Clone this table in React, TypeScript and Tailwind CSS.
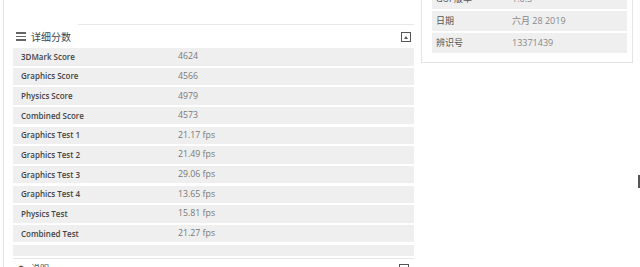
import React from "react";

const scores = [
  { label: "3DMark Score", value: "4624" },
  { label: "Graphics Score", value: "4566" },
  { label: "Physics Score", value: "4979" },
  { label: "Combined Score", value: "4573" },
  { label: "Graphics Test 1", value: "21.17 fps" },
  { label: "Graphics Test 2", value: "21.49 fps" },
  { label: "Graphics Test 3", value: "29.06 fps" },
  { label: "Graphics Test 4", value: "13.65 fps" },
  { label: "Physics Test", value: "15.81 fps" },
  { label: "Combined Test", value: "21.27 fps" },
];

const info = [
  { label: "GUI 版本", value: "1.0.5" },
  { label: "日期", value: "六月 28 2019" },
  { label: "辨识号", value: "13371439" },
];

function ListIcon() {
  return (
    <div className="flex flex-col gap-[2px] w-[10px]">
      <div className="h-[1.5px] bg-[#666]" />
      <div className="h-[1.5px] bg-[#666]" />
      <div className="h-[1.5px] bg-[#666]" />
    </div>
  );
}

function CollapseIcon() {
  return (
    <div className="w-[10px] h-[10px] border-[1.5px] border-[#555] flex items-center justify-center">
      <div className="w-0 h-0 border-l-[2.5px] border-r-[2.5px] border-b-[3px] border-l-transparent border-r-transparent border-b-[#555]" />
    </div>
  );
}

export default function App() {
  return (
    <div
      className="w-[640px] h-[267px] overflow-hidden bg-white flex relative"
      style={{ fontFamily: '"Open Sans", "Noto Sans CJK SC", sans-serif' }}
    >
      {/* page edge */}
      <div className="w-[3px] shrink-0" />
      <div className="w-px shrink-0 bg-[#e2e2e2]" />

      {/* left card */}
      <div className="ml-[9px] w-[401px] shrink-0 self-start flex flex-col">
        <div className="h-[25px] shrink-0 flex items-end">
          <div className="ml-[65px] flex-1 h-px bg-[#e8e8e8]" />
        </div>
        <div className="h-[23px] shrink-0 flex items-center pl-[3px] pr-[3px]">
          <ListIcon />
          <span className="ml-[5px] mt-[1px] text-[10px] text-[#444] leading-none">详细分数</span>
          <div className="ml-auto mt-[1px]">
            <CollapseIcon />
          </div>
        </div>
        <div className="flex flex-col gap-[2.17px]">
          {scores.map((s) => (
            <div key={s.label} className="h-[17.5px] bg-[#efefef] flex items-center text-[8px]">
              <span className="w-[165px] pl-[8px] font-semibold text-[#444]">{s.label}</span>
              <span className="text-[8.75px] text-[#777]">{s.value}</span>
            </div>
          ))}
        </div>
        <div className="mt-[2.5px] h-[11px] bg-[#efefef]" />
        <div className="mt-[2px] h-px bg-[#e6e6e6]" />
        <div className="mt-[4px] h-[12px] flex items-center pl-[4px] pr-[5px]">
          <span className="text-[9px] text-[#444]">⚙</span>
          <span className="ml-[6px] text-[9px] text-[#444]">说明</span>
          <div className="ml-auto">
            <CollapseIcon />
          </div>
        </div>
      </div>

      {/* right card */}
      <div className="ml-[7px] w-[212px] shrink-0 self-start h-[63px] border-l border-r border-b border-[#e4e4e4] flex flex-col justify-end pl-[10px] pr-[5px] pb-[9px]">
        <div className="flex flex-col gap-[2px]">
          {info.map((r) => (
            <div key={r.label} className="h-[20px] bg-[#efefef] flex items-center text-[9px]">
              <span className="w-[80px] pl-[4px] text-[#555]">{r.label}</span>
              <span className="text-[#888]">{r.value}</span>
            </div>
          ))}
        </div>
      </div>

      {/* scrollbar hint */}
      <div className="absolute right-0 top-[175px] w-[2px] h-[13px] bg-[#555]" />
    </div>
  );
}
